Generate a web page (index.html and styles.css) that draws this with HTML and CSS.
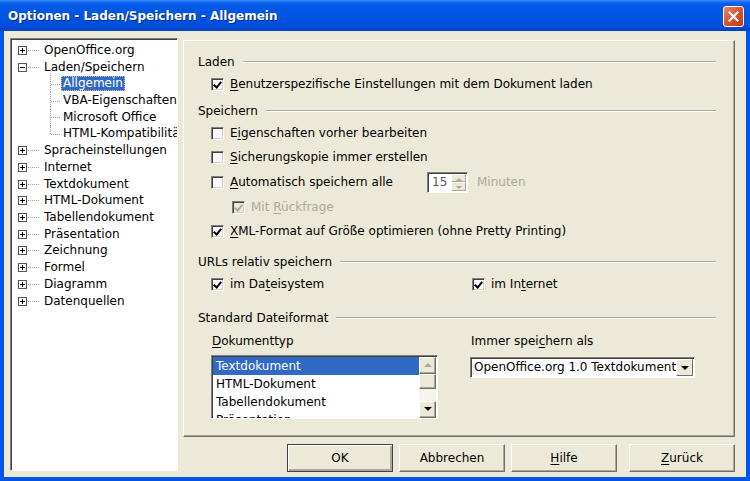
FILE: index.html
```html
<!DOCTYPE html>
<html lang="de">
<head>
  <meta charset="UTF-8" />
  <title>Optionen - Laden/Speichern - Allgemein</title>
  <link rel="stylesheet" href="styles.css">
</head>
<body>

  <div class="window">
    <div class="titlebar">
      <span class="title">Optionen - Laden/Speichern - Allgemein</span>
      <button class="close-btn">
        <svg width="11" height="11" viewBox="0 0 11 11"><path d="M1.5 1.5 L9.5 9.5 M9.5 1.5 L1.5 9.5" stroke="#fff" stroke-width="2.2" stroke-linecap="square"/></svg>
      </button>
    </div>

    <div class="content">
      <!-- left tree -->
      <div class="tree">
        <div class="node"><span class="exp plus"></span><span class="hline"></span><span class="label">OpenOffice.org</span></div>
        <div class="node"><span class="exp minus"></span><span class="hline"></span><span class="label">Laden/Speichern</span></div>
        <div class="node child"><span class="label selected">Allgemein</span></div>
        <div class="node child"><span class="label">VBA-Eigenschaften</span></div>
        <div class="node child"><span class="label">Microsoft Office</span></div>
        <div class="node child last"><span class="label">HTML-Kompatibilität</span></div>
        <div class="node"><span class="exp plus"></span><span class="hline"></span><span class="label">Spracheinstellungen</span></div>
        <div class="node"><span class="exp plus"></span><span class="hline"></span><span class="label">Internet</span></div>
        <div class="node"><span class="exp plus"></span><span class="hline"></span><span class="label">Textdokument</span></div>
        <div class="node"><span class="exp plus"></span><span class="hline"></span><span class="label">HTML-Dokument</span></div>
        <div class="node"><span class="exp plus"></span><span class="hline"></span><span class="label">Tabellendokument</span></div>
        <div class="node"><span class="exp plus"></span><span class="hline"></span><span class="label">Präsentation</span></div>
        <div class="node"><span class="exp plus"></span><span class="hline"></span><span class="label">Zeichnung</span></div>
        <div class="node"><span class="exp plus"></span><span class="hline"></span><span class="label">Formel</span></div>
        <div class="node"><span class="exp plus"></span><span class="hline"></span><span class="label">Diagramm</span></div>
        <div class="node"><span class="exp plus"></span><span class="hline"></span><span class="label">Datenquellen</span></div>
      </div>

      <div class="main">
        <div class="panel">

          <div class="section">
            <div class="head"><span>Laden</span><span class="rule"></span></div>
            <div class="row"><span class="cb checked"></span><span><u>B</u>enutzerspezifische Einstellungen mit dem Dokument laden</span></div>
          </div>

          <div class="section sec-save">
            <div class="head"><span>Speichern</span><span class="rule"></span></div>
            <div class="row"><span class="cb"></span><span>E<u>i</u>genschaften vorher bearbeiten</span></div>
            <div class="row"><span class="cb"></span><span><u>S</u>icherungskopie immer erstellen</span></div>
            <div class="row row-auto">
              <span class="cb"></span><span class="auto-label"><u>A</u>utomatisch speichern alle</span>
              <span class="spin"><span class="spin-val">15</span><span class="spin-btns"><span class="spin-up"></span><span class="spin-down"></span></span></span>
              <span class="muted minutes">Minuten</span>
            </div>
            <div class="row sub disabled"><span class="cb checked"></span><span>Mit <u>R</u>ückfrage</span></div>
            <div class="row"><span class="cb checked"></span><span><u>X</u>ML-Format auf Größe optimieren (ohne Pretty Printing)</span></div>
          </div>

          <div class="section sec-urls">
            <div class="head"><span>URLs relativ speichern</span><span class="rule"></span></div>
            <div class="row cols">
              <div class="col"><span class="cb checked"></span><span>im Da<u>t</u>eisystem</span></div>
              <div class="col"><span class="cb checked"></span><span>im In<u>t</u>ernet</span></div>
            </div>
          </div>

          <div class="section sec-format">
            <div class="head"><span>Standard Dateiformat</span><span class="rule"></span></div>
            <div class="format">
              <div class="fcol">
                <div class="flabel"><u>D</u>okumenttyp</div>
                <div class="listbox">
                  <div class="items">
                    <div class="item selected">Textdokument</div>
                    <div class="item">HTML-Dokument</div>
                    <div class="item">Tabellendokument</div>
                    <div class="item">Präsentation</div>
                  </div>
                  <div class="vscroll">
                    <span class="sbtn sbtn-up"></span>
                    <span class="thumb"></span>
                    <span class="track"></span>
                    <span class="sbtn sbtn-down"></span>
                  </div>
                </div>
              </div>
              <div class="fcol">
                <div class="flabel">Immer spei<u>c</u>hern als</div>
                <div class="combo">
                  <span class="combo-text">OpenOffice.org 1.0 Textdokument</span>
                  <span class="combo-btn"></span>
                </div>
              </div>
            </div>
          </div>

        </div>

        <div class="buttons">
          <button class="btn default">OK</button>
          <button class="btn">Abbrechen</button>
          <button class="btn help"><u>H</u>ilfe</button>
          <button class="btn"><u>Z</u>urück</button>
        </div>
      </div>
    </div>
  </div>

</body>
</html>
```

FILE: styles.css
```css
* { box-sizing: border-box; margin: 0; padding: 0; }
body { width: 750px; height: 481px; overflow: hidden; font-family: 'DejaVu Sans', Verdana, sans-serif; font-size: 12px; color: #000; background: #0055e5; }
u { text-decoration: underline; text-underline-offset: 2px; }

.window { width: 750px; height: 481px; display: flex; flex-direction: column; }

/* title bar */
.titlebar {
  height: 31px; display: flex; align-items: center; justify-content: space-between;
  padding: 0 6px 0 8px;
  background: linear-gradient(#3d8eff 0, #0a5fec 3px, #0058e6 8px, #0054e0 20px, #004ad6 28px, #003fc2 31px);
}
.title {
  color: #fff; font-weight: bold; font-size: 12px;
  text-shadow: 1px 1px 0 #0a2a8a;
}
.close-btn {
  width: 21px; height: 21px; margin-top: 2px;
  display: flex; align-items: center; justify-content: center;
  background: linear-gradient(135deg, #e9886e, #d9532f 50%, #c13b17);
  border: 1px solid #fff; border-radius: 3px;
}

/* body of the dialog */
.content {
  flex: 1; display: flex;
  background: #ece9d8;
  border: 4px solid #0055e5; border-top: none;
  padding: 7px 11px 5px 6px;
}

/* tree */
.tree {
  width: 168px; height: 433px; overflow: hidden;
  background: #fff;
  border: 1px solid; border-color: #808080 #fff #fff #808080;
  box-shadow: inset 1px 1px 0 #404040;
  padding-top: 3px;
}
.node {
  position: relative; height: 16.73px; display: flex; align-items: center;
  padding-left: 7px; white-space: nowrap;
}
.exp {
  width: 9px; height: 9px; flex: none; position: relative;
  border: 1px solid #555; background: #fff;
}
.exp::before {
  content: ""; position: absolute; left: 1px; top: 3px; width: 5px; height: 1px; background: #000;
}
.exp.plus::after {
  content: ""; position: absolute; left: 3px; top: 1px; width: 1px; height: 5px; background: #000;
}
.hline { width: 11px; margin-left: 1px; border-top: 1px dotted #a0a0a0; }
.label { margin-left: 3px; padding: 0 2px; line-height: 15px; }
.label.selected {
  background: #316ac5; color: #fff;
  outline: 1px dotted #d9c88e; outline-offset: -1px;
}
.node.child { padding-left: 50px; }
.node.child .label { margin-left: 0; }
.node.child::before {
  content: ""; position: absolute; left: 39px; top: 0; bottom: 0;
  border-left: 1px dotted #a0a0a0;
}
.node.child.last::before { bottom: 50%; }
.node.child::after {
  content: ""; position: absolute; left: 40px; width: 9px; top: 50%;
  border-top: 1px dotted #a0a0a0;
}

/* right side */
.main { margin-left: 5px; width: 552px; display: flex; flex-direction: column; }
.panel {
  margin-top: 2px; height: 397px;
  border: 1px solid; border-color: #fff #716f64 #716f64 #fff;
  box-shadow: inset -1px -1px 0 #aca899;
  padding: 11px 18px 0 14px;
}
.head { height: 20px; display: flex; align-items: center; }
.rule { flex: 1; margin-left: 8px; height: 2px; border-top: 1px solid #aca899; border-bottom: 1px solid #fff; }
.sec-save { margin-top: 5px; }
.sec-urls { margin-top: 9px; }
.sec-format { margin-top: 12px; }

.row { height: 24px; display: flex; align-items: center; padding-left: 13px; white-space: nowrap; }
.row-auto { height: 26px; }
.row.sub { padding-left: 34px; }
.cb {
  width: 13px; height: 13px; flex: none; margin-right: 6px; position: relative;
  background: #fff;
  border: 1px solid; border-color: #808080 #fff #fff #808080;
  box-shadow: inset 1px 1px 0 #404040, inset -1px -1px 0 #d4d0c8;
}
.cb.checked::after {
  content: ""; position: absolute; left: 3px; top: 1px; width: 3px; height: 6px;
  border: solid #000; border-width: 0 2px 2px 0; transform: rotate(40deg);
}
.disabled { color: #aca899; }
.disabled .cb { background: #ece9d8; }
.disabled .cb.checked::after { border-color: #aca899; }
.muted { color: #aca899; }

.auto-label { width: 197px; }
.spin {
  width: 41px; height: 21px; display: flex; background: #fff;
  border: 1px solid; border-color: #808080 #fff #fff #808080;
  box-shadow: inset 1px 1px 0 #404040;
}
.spin-val { flex: 1; padding: 2px 0 0 4px; color: #555; }
.spin-btns { width: 15px; display: flex; flex-direction: column; margin: 1px 1px 1px 0; }
.spin-up, .spin-down {
  flex: 1; position: relative; background: #ece9d8;
  border: 1px solid; border-color: #fff #aca899 #aca899 #fff;
}
.spin-up::after, .spin-down::after {
  content: ""; position: absolute; left: 4px; top: 2px;
  border: 3px solid transparent;
}
.spin-up::after { border-bottom-color: #aca899; top: 0; }
.spin-down::after { border-top-color: #aca899; top: 3px; }
.minutes { margin-left: 9px; }

.cols { padding-left: 13px; }
.col { display: flex; align-items: center; }
.col:first-child { width: 261px; }

.format { display: flex; padding-left: 13px; }
.fcol:first-child { width: 259px; }
.flabel { height: 20px; margin-top: 3px; display: flex; align-items: center; padding-left: 1px; }

.listbox {
  margin-top: 4px; width: 227px; height: 64px; display: flex; overflow: hidden;
  background: #fff;
  border: 1px solid; border-color: #808080 #fff #fff #808080;
  box-shadow: inset 1px 1px 0 #404040;
}
.items { flex: 1; padding: 1px 0 0 1px; overflow: hidden; }
.item { height: 18px; line-height: 18px; padding-left: 3px; white-space: nowrap; }
.item.selected { background: #316ac5; color: #fff; }
.vscroll { width: 18px; display: flex; flex-direction: column; padding: 1px 1px 0 0; }
.sbtn, .thumb {
  position: relative; background: #ece9d8;
  border: 1px solid; border-color: #fff #716f64 #716f64 #fff;
  box-shadow: inset -1px -1px 0 #aca899;
}
.sbtn { height: 17px; }
.thumb { height: 15px; }
.track { flex: 1; background: #f4f3ee; }
.sbtn::after {
  content: ""; position: absolute; left: 4px; border: 4px solid transparent;
}
.sbtn-up::after { top: 1px; border-bottom-color: #aca899; }
.sbtn-down::after { top: 5px; border-top-color: #000; }

.combo {
  margin-top: 6px; width: 225px; height: 21px; display: flex; overflow: hidden;
  background: #fff;
  border: 1px solid; border-color: #808080 #fff #fff #808080;
  box-shadow: inset 1px 1px 0 #404040;
}
.combo-text { flex: 1; padding: 2px 0 0 3px; white-space: nowrap; overflow: hidden; }
.combo-btn {
  width: 17px; margin: 1px 1px 1px 0; position: relative; background: #ece9d8;
  border: 1px solid; border-color: #fff #716f64 #716f64 #fff;
}
.combo-btn::after {
  content: ""; position: absolute; left: 4px; top: 6px;
  border: 4px solid transparent; border-top-color: #000;
}

/* bottom buttons */
.buttons { margin-top: 7px; display: flex; justify-content: flex-end; gap: 6px; }
.btn {
  width: 106px; height: 28px;
  font-family: inherit; font-size: 12px; color: #000;
  background: #ece9d8;
  border: 1px solid; border-color: #fff #716f64 #716f64 #fff;
  box-shadow: inset -1px -1px 0 #aca899;
}
.btn.default { border-color: #404040; box-shadow: inset 1px 1px 0 #fff, inset -2px -2px 0 #aca899; }
.btn.help { margin-right: 6px; }
```
